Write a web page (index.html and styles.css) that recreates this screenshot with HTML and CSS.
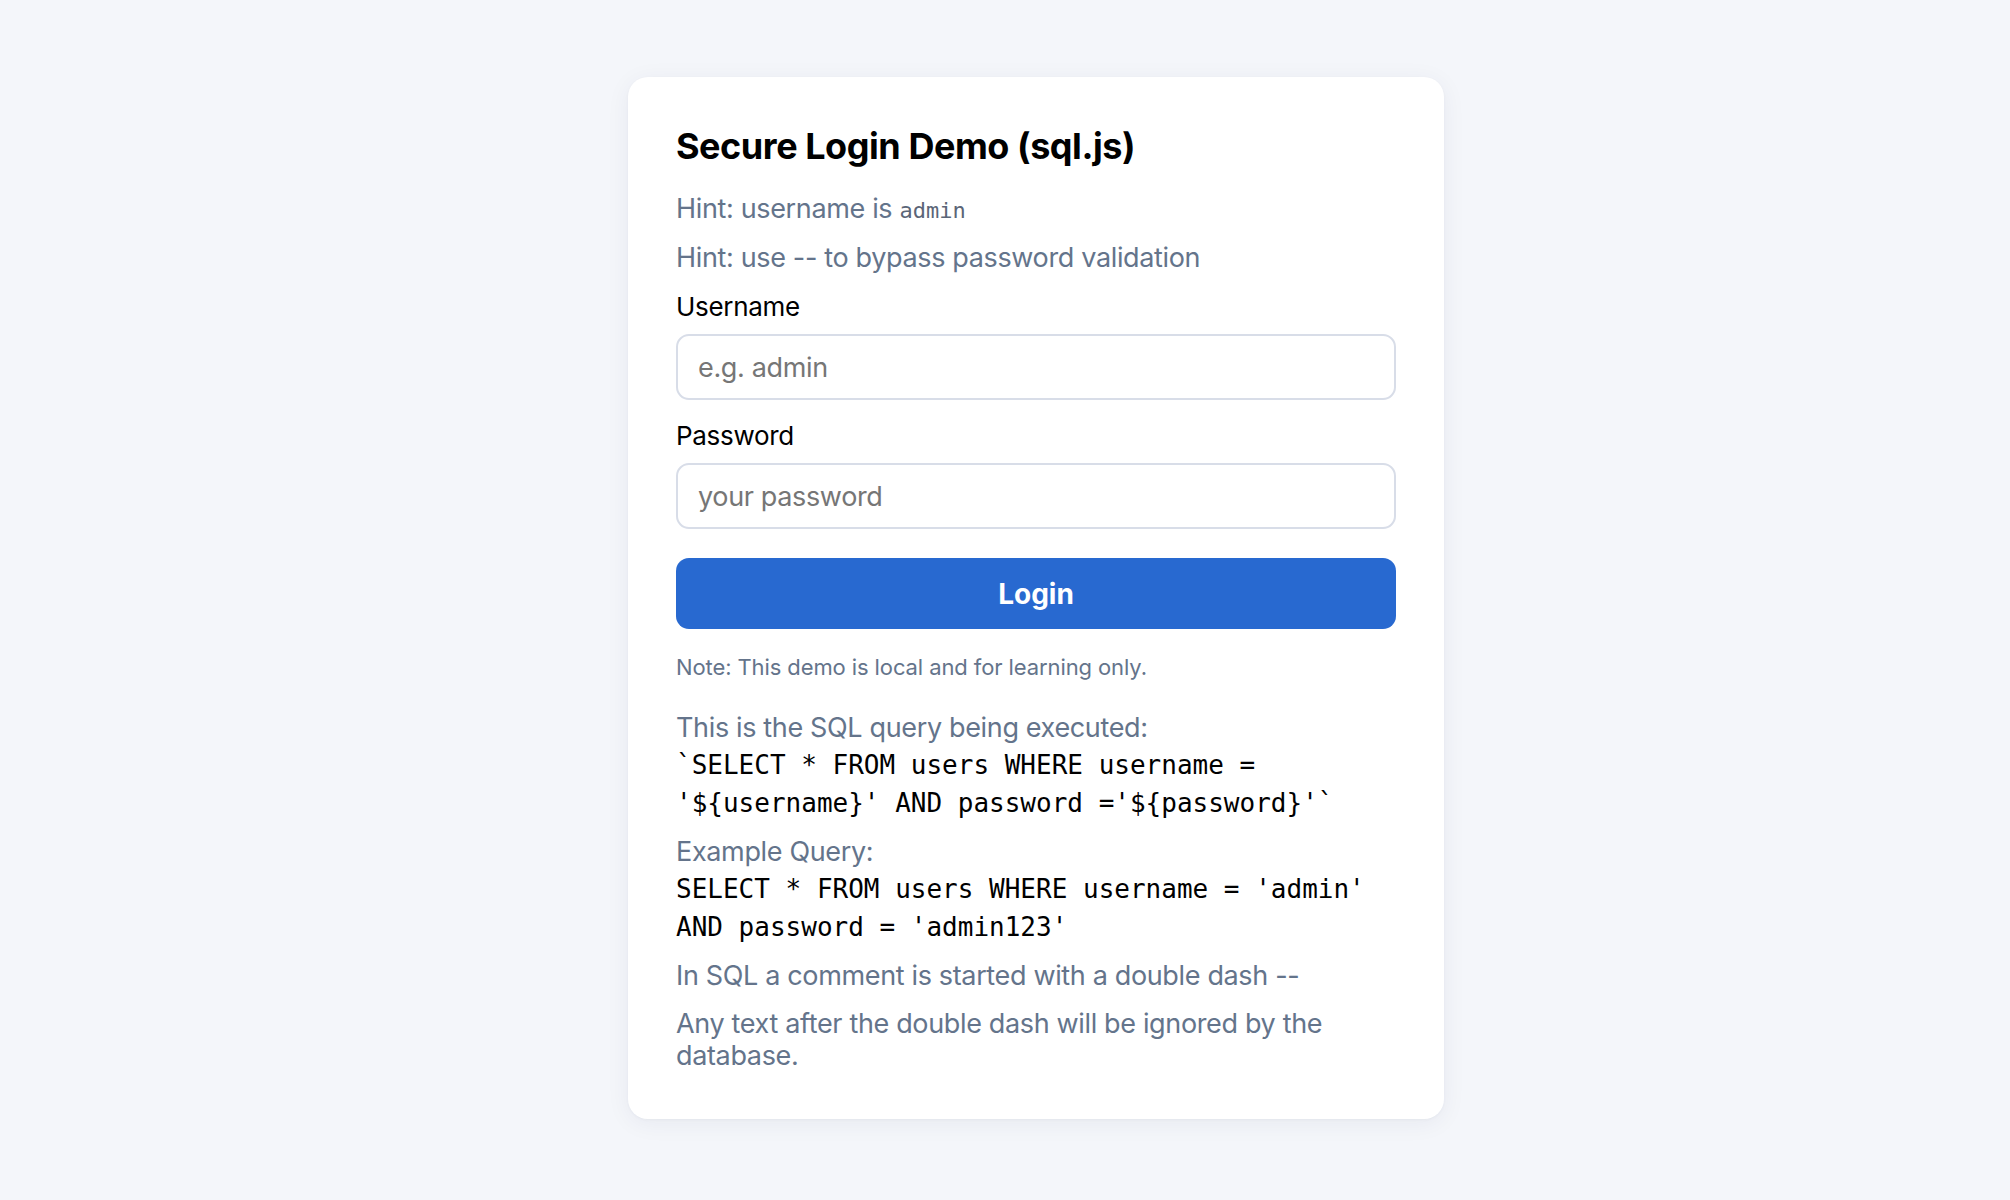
FILE: index.html
```html
<!DOCTYPE html>
<html lang="en">
<head>
<meta charset="utf-8">
<title>Secure Login Demo (sql.js)</title>
<link rel="stylesheet" href="styles.css">
</head>
<body>
<main class="card">
  <h1 class="title">Secure Login Demo (sql.js)</h1>
  <p class="hint hint-first">Hint: username is <code class="inline-code">admin</code></p>
  <p class="hint hint-second">Hint: use -- to bypass password validation</p>
  <form class="form">
    <label class="label" for="username">Username</label>
    <input class="input" id="username" type="text" placeholder="e.g. admin">
    <label class="label label-password" for="password">Password</label>
    <input class="input" id="password" type="password" placeholder="your password">
    <button class="button" type="button">Login</button>
  </form>
  <p class="note">Note: This demo is local and for learning only.</p>
  <div class="explain">
    <p class="muted">This is the SQL query being executed:</p>
    <pre class="code">`SELECT * FROM users WHERE username =
'${username}' AND password ='${password}'`</pre>
    <p class="muted muted-gap">Example Query:</p>
    <pre class="code">SELECT * FROM users WHERE username = 'admin'
AND password = 'admin123'</pre>
    <p class="muted muted-gap">In SQL a comment is started with a double dash --</p>
    <p class="muted muted-last">Any text after the double dash will be ignored by the database.</p>
  </div>
</main>
</body>
</html>
```
FILE: styles.css
```css
html, body {
  margin: 0;
  padding: 0;
}

body {
  background: #f4f6fa;
  font-family: Inter, "Noto Sans", "Liberation Sans", sans-serif;
  min-height: 1200px;
  padding-top: 77px;
  box-sizing: border-box;
}

.card {
  width: 816px;
  box-sizing: border-box;
  margin-left: 628px;
  background: #ffffff;
  border-radius: 20px;
  padding: 46px 48px 47px;
  box-shadow: 0 4px 24px rgba(30, 41, 80, 0.06), 0 1px 3px rgba(30, 41, 80, 0.04);
}

.title {
  margin: 0;
  font-size: 36px;
  line-height: 46px;
  font-weight: 700;
  color: #000000;
  letter-spacing: -0.45px;
}

.hint {
  margin: 0;
  font-size: 27px;
  line-height: 32px;
  color: #64748b;
  letter-spacing: -0.35px;
}

.hint-first {
  margin-top: 24px;
}

.hint-second {
  margin-top: 15px;
}

.inline-code {
  font-family: "DejaVu Sans Mono", "Liberation Mono", monospace;
  font-size: 22px;
  letter-spacing: 0;
  color: #5b6577;
}

.form {
  display: flex;
  flex-direction: column;
  margin-top: 17px;
}

.label {
  font-size: 26px;
  line-height: 32px;
  color: #000000;
  letter-spacing: -0.3px;
}

.label-password {
  margin-top: 20px;
}

.input {
  margin-top: 11px;
  height: 66px;
  box-sizing: border-box;
  border: 2px solid #d8dde8;
  border-radius: 13px;
  padding: 0 20px;
  font-family: inherit;
  font-size: 27px;
  letter-spacing: -0.35px;
  color: #111;
  background: #fff;
  outline: none;
}

.input::placeholder {
  color: #767676;
}

.button {
  margin-top: 29px;
  height: 71px;
  border: none;
  border-radius: 13px;
  background: #2869d0;
  color: #ffffff;
  font-family: inherit;
  font-size: 28px;
  font-weight: 700;
  cursor: pointer;
}

.note {
  margin: 23px 0 0;
  font-size: 22px;
  line-height: 30px;
  color: #64748b;
  letter-spacing: -0.1px;
}

.explain {
  margin-top: 30px;
}

.muted {
  margin: 0;
  font-size: 27px;
  line-height: 32px;
  color: #64748b;
  letter-spacing: -0.35px;
}

.muted-gap {
  margin-top: 14px;
}

.code {
  margin: 2px 0 0;
  font-family: "DejaVu Sans Mono", "Liberation Mono", monospace;
  font-size: 26px;
  line-height: 38px;
  color: #000;
  white-space: pre;
}

.muted-last {
  margin-top: 16px;
}
```
